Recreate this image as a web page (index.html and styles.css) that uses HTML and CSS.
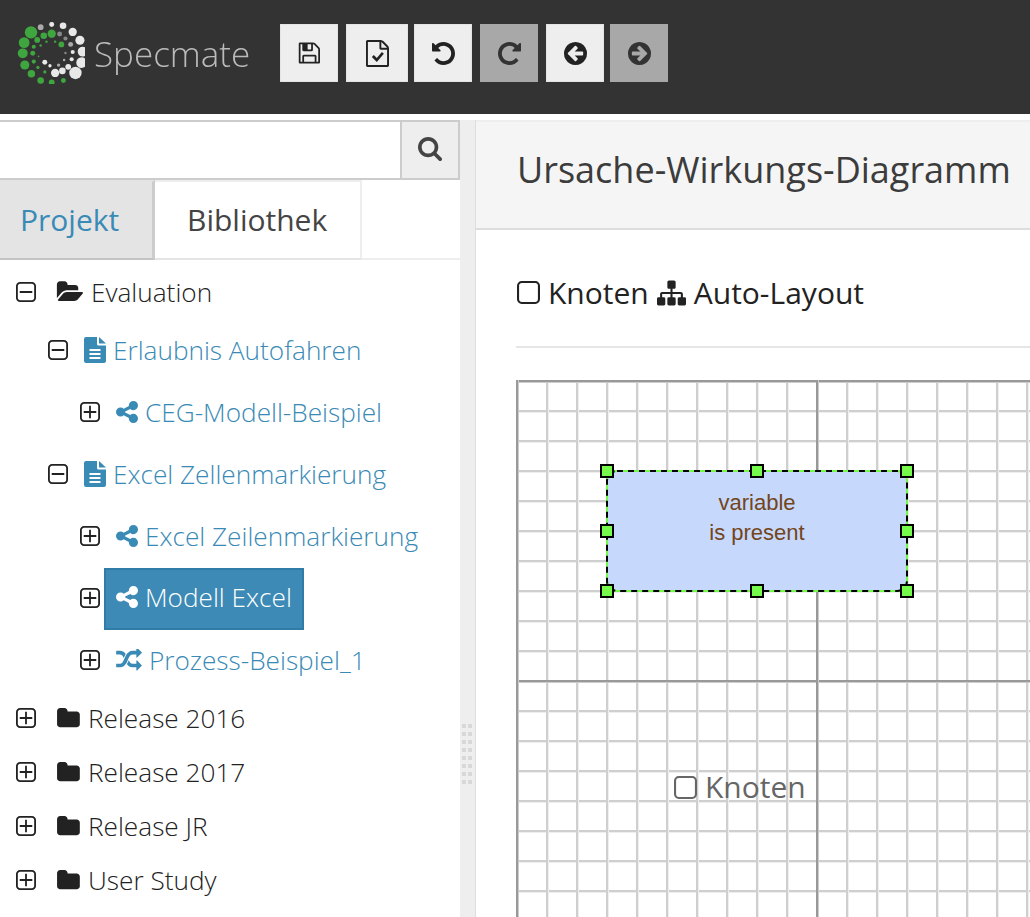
FILE: index.html
```html
<!DOCTYPE html>
<html lang="de">
<head>
  <meta charset="UTF-8">
  <title>Specmate</title>
  <link rel="stylesheet" href="styles.css">
</head>
<body>

<svg class="sprites" width="0" height="0">
  <symbol id="i-save" viewBox="0 128 1664 1536"><path d="M512 1536h768v-384h-768v384zm896 0h128v-896q0-14-10-38.500t-20-34.500l-281-281q-10-10-34-20t-39-10v416q0 40-28 68t-68 28h-576q-40 0-68-28t-28-68v-416h-128v1280h128v-416q0-40 28-68t68-28h832q40 0 68 28t28 68v416zm-384-928v-320q0-13-9.500-22.500t-22.500-9.500h-192q-13 0-22.500 9.500t-9.500 22.500v320q0 13 9.500 22.500t22.500 9.500h192q13 0 22.500-9.500t9.500-22.500zm640 32v928q0 40-28 68t-68 28h-1344q-40 0-68-28t-28-68v-1344q0-40 28-68t68-28h928q40 0 88 20t76 48l280 280q28 28 48 76t20 88z"/></symbol>
  <symbol id="i-filecheck" viewBox="128 0 1536 1792"><path d="M1596 380q28 28 48 76t20 88v1152q0 40-28 68t-68 28h-1344q-40 0-68-28t-28-68v-1600q0-40 28-68t68-28h896q40 0 88 20t76 48zm-444-244v376h376q-10-29-22-41l-313-313q-12-12-41-22zm384 1528v-1024h-416q-40 0-68-28t-28-68v-416h-768v1536h1280z"/><path d="M520 1130l130-130 200 200 340-400 130 115-470 550z"/></symbol>
  <symbol id="i-undo" viewBox="128 128 1536 1536"><path d="M1664 896q0 156-61 298t-164 245-245 164-298 61q-172 0-327-72.500t-264-204.500q-7-10-6.500-22.500t8.500-20.500l137-138q10-9 25-9 16 2 23 12 73 95 179 147t225 52q104 0 198.500-40.500t163.500-109.500 109.500-163.500 40.500-198.500-40.500-198.500-109.500-163.500-163.500-109.500-198.500-40.500q-98 0-188 35.500t-160 101.500l137 138q31 30 14 69-17 40-59 40h-448q-26 0-45-19t-19-45v-448q0-42 40-59 39-17 69 14l130 129q107-101 244.500-156.500t284.500-55.500q156 0 298 61t245 164 164 245 61 298z"/></symbol>
  <symbol id="i-arrow" viewBox="0 128 1536 1536"><path d="M1280 960v-128q0-26-19-45t-45-19h-502l189-189q19-19 19-45t-19-45l-91-91q-18-18-45-18t-45 18l-362 362-91 91q-18 18-18 45t18 45l91 91 362 362q18 18 45 18t45-18l91-91q18-18 18-45t-18-45l-189-189h502q26 0 45-19t19-45zm256-64q0 209-103 385.500t-279.500 279.500-385.500 103-385.500-103-279.500-279.500-103-385.500 103-385.500 279.500-279.500 385.500-103 385.500 103 279.500 279.500 103 385.500z"/></symbol>
  <symbol id="i-search" viewBox="0 128 1664 1664"><path d="M1152 832q0-185-131.500-316.500t-316.500-131.500-316.500 131.500-131.500 316.500 131.500 316.500 316.500 131.500 316.500-131.500 131.500-316.500zm512 832q0 52-38 90t-90 38q-54 0-90-38l-343-342q-179 124-399 124-143 0-273.500-55.500t-225-150-150-225-55.500-273.500 55.500-273.500 150-225 225-150 273.500-55.500 273.500 55.500 225 150 150 225 55.500 273.500q0 220-124 399l343 343q37 37 37 90z"/></symbol>
  <symbol id="i-plus" viewBox="192 128 1408 1408"><path d="M1344 800v64q0 14-9 23t-23 9h-352v352q0 14-9 23t-23 9h-64q-14 0-23-9t-9-23v-352h-352q-14 0-23-9t-9-23v-64q0-14 9-23t23-9h352v-352q0-14 9-23t23-9h64q14 0 23 9t9 23v352h352q14 0 23 9t9 23zm128 448v-832q0-66-47-113t-113-47h-832q-66 0-113 47t-47 113v832q0 66 47 113t113 47h832q66 0 113-47t47-113zm128-832v832q0 119-84.500 203.500t-203.500 84.500h-832q-119 0-203.500-84.500t-84.500-203.500v-832q0-119 84.500-203.500t203.500-84.500h832q119 0 203.500 84.500t84.500 203.500z"/></symbol>
  <symbol id="i-minus" viewBox="192 128 1408 1408"><path d="M1344 800v64q0 14-9 23t-23 9h-832q-14 0-23-9t-9-23v-64q0-14 9-23t23-9h832q14 0 23 9t9 23zm128 448v-832q0-66-47-113t-113-47h-832q-66 0-113 47t-47 113v832q0 66 47 113t113 47h832q66 0 113-47t47-113zm128-832v832q0 119-84.500 203.500t-203.500 84.500h-832q-119 0-203.500-84.500t-84.500-203.500v-832q0-119 84.500-203.500t203.500-84.500h832q119 0 203.500 84.500t84.500 203.500z"/></symbol>
  <symbol id="i-folder" viewBox="0 128 1728 1536"><path d="M1728 608v704q0 92-66 158t-158 66h-1216q-92 0-158-66t-66-158v-960q0-92 66-158t158-66h320q92 0 158 66t66 158v32h672q92 0 158 66t66 158z"/></symbol>
  <symbol id="i-folder-open" viewBox="0 128 1943 1536"><path d="M1943 952q0 31-31 66l-336 396q-43 51-120.500 86.500t-143.500 35.500h-1088q-34 0-60.500-13t-26.500-43q0-31 31-66l336-396q43-51 120.500-86.500t143.500-35.500h1088q34 0 60.500 13t26.500 43zm-343-344v160h-832q-94 0-197 47.500t-164 119.500l-337 396-5 6q0-4-.5-12.500t-.5-12.500v-960q0-92 66-158t158-66h320q92 0 158 66t66 158v32h544q92 0 158 66t66 158z"/></symbol>
  <symbol id="i-doc" viewBox="0 0 22 26"><path fill-rule="evenodd" d="M2 0h11v7q0 1.500 1.500 1.500H22V24q0 2-2 2H2q-2 0-2-2V2q0-2 2-2zM15 0l7 6.500h-7zM5.500 12v2h11v-2zM5.500 16v2h11v-2zM5.500 20v2h11v-2z"/></symbol>
  <symbol id="i-share" viewBox="0 128 1536 1536"><path d="M1216 1024q133 0 226.500 93.500t93.500 226.500-93.500 226.500-226.500 93.500-226.500-93.500-93.500-226.500q0-12 2-34l-360-180q-92 86-218 86-133 0-226.500-93.500t-93.500-226.500 93.500-226.500 226.500-93.500q126 0 218 86l360-180q-2-22-2-34 0-133 93.500-226.500t226.500-93.500 226.500 93.500 93.500 226.500-93.500 226.500-226.500 93.500q-126 0-218-86l-360 180q2 22 2 34t-2 34l360 180q92-86 218-86z"/></symbol>
  <symbol id="i-random" viewBox="0 128 1792 1536"><path d="M666 481q-60 92-137 273-22-45-37-72.500t-40.500-63.500-51-56.500-63-35-81.500-14.500h-224q-14 0-23-9t-9-23v-192q0-14 9-23t23-9h224q250 0 410 225zm1126 799q0 14-9 23l-320 320q-9 9-23 9-13 0-22.500-9.500t-9.500-22.500v-192q-32 0-85 .5t-81 1-73-1-71-5-64-10.500-63-18.500-58-28.500-59-40-55-53.500-56-69.500q59-93 136-273 22 45 37 72.500t40.500 63.500 51 56.500 63 35 81.500 14.500h256v-192q0-14 9-23t23-9q12 0 24 10l319 319q9 9 9 23zm0-896q0 14-9 23l-320 320q-9 9-23 9-13 0-22.500-9.500t-9.500-22.500v-192h-256q-48 0-87 15t-69 45-51 61.500-45 77.500q-32 62-78 171-29 66-49.500 111t-54 105-64 100-74 83-90 68.500-106.500 42-128 16.500h-224q-14 0-23-9t-9-23v-192q0-14 9-23t23-9h224q48 0 87-15t69-45 51-61.500 45-77.500q32-62 78-171 29-66 49.500-111t54-105 64-100 74-83 90-68.500 106.500-42 128-16.500h256v-192q0-14 9-23t23-9q12 0 24 10l319 319q9 9 9 23z"/></symbol>
  <symbol id="i-square" viewBox="0 128 1408 1408"><path d="M1120 256h-832q-66 0-113 47t-47 113v832q0 66 47 113t113 47h832q66 0 113-47t47-113v-832q0-66-47-113t-113-47zm288 160v832q0 119-84.500 203.500t-203.500 84.500h-832q-119 0-203.500-84.500t-84.500-203.500v-832q0-119 84.500-203.500t203.500-84.500h832q119 0 203.500 84.500t84.500 203.500z"/></symbol>
  <symbol id="i-sitemap" viewBox="0 128 1792 1536"><path d="M1792 1248v320q0 40-28 68t-68 28h-320q-40 0-68-28t-28-68v-320q0-40 28-68t68-28h96v-192h-512v192h96q40 0 68 28t28 68v320q0 40-28 68t-68 28h-320q-40 0-68-28t-28-68v-320q0-40 28-68t68-28h96v-192h-512v192h96q40 0 68 28t28 68v320q0 40-28 68t-68 28h-320q-40 0-68-28t-28-68v-320q0-40 28-68t68-28h96v-192q0-52 38-90t90-38h512v-192h-96q-40 0-68-28t-28-68v-320q0-40 28-68t68-28h320q40 0 68 28t28 68v320q0 40-28 68t-68 28h-96v192h512q52 0 90 38t38 90v192h96q40 0 68 28t28 68z"/></symbol>
</svg>

<nav class="navbar">
  <div class="brand">
    <svg class="brand-mark" viewBox="50 40 196 180">
      <g fill="#3fa63f">
        <circle cx="90" cy="70" r="15"/><circle cx="70" cy="100" r="13"/><circle cx="66" cy="131" r="12"/>
        <circle cx="72" cy="165" r="11"/><circle cx="91" cy="190" r="9"/><circle cx="118" cy="210" r="8"/>
        <circle cx="150" cy="215" r="7"/><circle cx="184" cy="210" r="6"/><circle cx="127" cy="80" r="8"/>
        <circle cx="150" cy="74" r="10"/><circle cx="108" cy="92" r="7"/><circle cx="95" cy="131" r="6"/>
        <circle cx="98" cy="155" r="5"/><circle cx="110" cy="172" r="4"/><circle cx="98" cy="112" r="5"/>
        <circle cx="130" cy="185" r="4"/><circle cx="178" cy="105" r="7"/><circle cx="160" cy="97" r="3"/>
        <circle cx="135" cy="97" r="3"/><circle cx="118" cy="108" r="3"/><circle cx="112" cy="140" r="2"/>
      </g>
      <g fill="#e8e8e8">
        <circle cx="118" cy="55" r="7" fill="#aaa"/><circle cx="150" cy="47" r="6"/><circle cx="183" cy="51" r="8"/>
        <circle cx="211" cy="69" r="10"/><circle cx="232" cy="93" r="11"/><circle cx="240" cy="126" r="12"/>
        <circle cx="237" cy="158" r="13"/><circle cx="219" cy="188" r="15"/><circle cx="198" cy="170" r="7"/>
        <circle cx="181" cy="182" r="8"/><circle cx="160" cy="188" r="10"/><circle cx="208" cy="148" r="5"/>
        <circle cx="211" cy="127" r="5"/><circle cx="205" cy="105" r="6" fill="#aaa"/><circle cx="190" cy="88" r="5" fill="#888"/>
        <circle cx="173" cy="75" r="6" fill="#888"/><circle cx="130" cy="157" r="6"/><circle cx="145" cy="167" r="4"/>
        <circle cx="170" cy="165" r="4" fill="#aaa"/><circle cx="186" cy="150" r="3" fill="#aaa"/><circle cx="190" cy="130" r="3" fill="#888"/>
      </g>
    </svg>
    <span class="brand-name">Specmate</span>
  </div>
  <div class="toolbar">
    <button class="tool-btn"><svg class="ic-save"><use href="#i-save"/></svg></button>
    <button class="tool-btn btn-wide"><svg class="ic-check"><use href="#i-filecheck"/></svg></button>
    <button class="tool-btn btn-tight"><svg class="ic-round"><use href="#i-undo"/></svg></button>
    <button class="tool-btn off"><svg class="ic-round flip"><use href="#i-undo"/></svg></button>
    <button class="tool-btn"><svg class="ic-round"><use href="#i-arrow"/></svg></button>
    <button class="tool-btn off btn-tight"><svg class="ic-round flip"><use href="#i-arrow"/></svg></button>
  </div>
</nav>

<div class="main">
  <aside class="sidebar">
    <div class="search">
      <input class="search-input" type="text">
      <button class="search-btn"><svg><use href="#i-search"/></svg></button>
    </div>
    <div class="tabs">
      <div class="tab active">Projekt</div>
      <div class="tab">Bibliothek</div>
    </div>
    <ul class="tree">
      <li class="row root">
        <svg class="toggle"><use href="#i-minus"/></svg>
        <a class="node"><svg class="ic-open"><use href="#i-folder-open"/></svg>Evaluation</a>
      </li>
      <li class="row lvl1">
        <svg class="toggle"><use href="#i-minus"/></svg>
        <a class="node link"><svg class="ic-doc"><use href="#i-doc"/></svg>Erlaubnis Autofahren</a>
      </li>
      <li class="row lvl2">
        <svg class="toggle"><use href="#i-plus"/></svg>
        <a class="node link"><svg class="ic-share"><use href="#i-share"/></svg>CEG-Modell-Beispiel</a>
      </li>
      <li class="row lvl1">
        <svg class="toggle"><use href="#i-minus"/></svg>
        <a class="node link"><svg class="ic-doc"><use href="#i-doc"/></svg>Excel Zellenmarkierung</a>
      </li>
      <li class="row lvl2">
        <svg class="toggle"><use href="#i-plus"/></svg>
        <a class="node link"><svg class="ic-share"><use href="#i-share"/></svg>Excel Zeilenmarkierung</a>
      </li>
      <li class="row lvl2">
        <svg class="toggle"><use href="#i-plus"/></svg>
        <a class="node selected"><svg class="ic-share"><use href="#i-share"/></svg>Modell Excel</a>
      </li>
      <li class="row lvl2">
        <svg class="toggle"><use href="#i-plus"/></svg>
        <a class="node link"><svg class="ic-random"><use href="#i-random"/></svg>Prozess-Beispiel_1</a>
      </li>
      <li class="row root">
        <svg class="toggle"><use href="#i-plus"/></svg>
        <a class="node"><svg class="ic-folder"><use href="#i-folder"/></svg>Release 2016</a>
      </li>
      <li class="row root">
        <svg class="toggle"><use href="#i-plus"/></svg>
        <a class="node"><svg class="ic-folder"><use href="#i-folder"/></svg>Release 2017</a>
      </li>
      <li class="row root">
        <svg class="toggle"><use href="#i-plus"/></svg>
        <a class="node"><svg class="ic-folder"><use href="#i-folder"/></svg>Release JR</a>
      </li>
      <li class="row root">
        <svg class="toggle"><use href="#i-plus"/></svg>
        <a class="node"><svg class="ic-folder"><use href="#i-folder"/></svg>User Study</a>
      </li>
    </ul>
  </aside>

  <div class="splitter"><div class="grip"></div></div>

  <section class="content">
    <header class="page-head">Ursache-Wirkungs-Diagramm</header>
    <div class="page-body">
      <div class="palette">
        <svg class="ic-square"><use href="#i-square"/></svg>Knoten
        <svg class="ic-sitemap"><use href="#i-sitemap"/></svg>Auto-Layout
      </div>
      <div class="canvas">
        <div class="ceg-node">
          <svg class="ceg-shape" viewBox="0 0 300 120">
            <rect class="shape-fill" x="0" y="0" width="300" height="120" rx="10"/>
            <rect class="shape-dash" x="0" y="0" width="300" height="120" rx="10"/>
          </svg>
          <div class="ceg-label">variable<br>is present</div>
          <span class="handle h-tl"></span><span class="handle h-tc"></span><span class="handle h-tr"></span>
          <span class="handle h-ml"></span><span class="handle h-mr"></span>
          <span class="handle h-bl"></span><span class="handle h-bc"></span><span class="handle h-br"></span>
        </div>
        <div class="canvas-hint"><svg class="ic-square"><use href="#i-square"/></svg>Knoten</div>
      </div>
    </div>
  </section>
</div>

</body>
</html>
```
FILE: styles.css
```css
html, body {
  margin: 0;
  height: 917px;
  overflow: hidden;
}
body {
  font-family: "Open Sans", sans-serif;
  color: #333;
  background: #fff;
}
svg {
  fill: currentColor;
}
.sprites {
  position: absolute;
}

/* navbar */
.navbar {
  display: flex;
  height: 114px;
  background: #333;
}
.brand {
  display: flex;
  width: 280px;
  height: 82px;
  padding: 24px 0 0 17px;
  box-sizing: border-box;
  align-items: center;
}
.brand-mark {
  width: 68px;
  height: 62px;
  flex: none;
  filter: blur(0.5px);
}
.brand-mark circle {
  transform-box: fill-box;
  transform-origin: center;
  transform: scale(1.2);
}
.brand-name {
  margin-left: 9px;
  font-size: 35px;
  font-weight: 300;
  color: #bbb;
  filter: blur(0.6px);
}
.toolbar {
  display: flex;
  gap: 8px;
  padding-top: 24px;
}
.tool-btn {
  display: flex;
  align-items: center;
  justify-content: center;
  width: 58px;
  height: 58px;
  padding: 0;
  background: #eee;
  border: 1px solid #e4e4e4;
  color: #222;
}
.tool-btn.off {
  background: #a8a8a8;
  border-color: #a8a8a8;
  color: #333;
}
.btn-wide {
  width: 62px;
}
.btn-tight {
  margin-left: -2px;
}
.ic-save { width: 23px; height: 22px; margin-right: 2px; }
.ic-check { width: 23px; height: 27px; }
.ic-round { width: 23px; height: 23px; }
.flip { transform: scaleX(-1); }

/* main layout */
.main {
  display: flex;
  margin-top: 6px;
  height: 797px;
}
.sidebar {
  width: 460px;
  flex: none;
}
.search {
  display: flex;
  height: 60px;
  box-sizing: border-box;
  border-top: 2px solid #ccc;
  border-bottom: 2px solid #ccc;
}
.search-input {
  flex: 1;
  min-width: 0;
  border: none;
  padding: 0;
}
.search-btn {
  width: 60px;
  padding: 0 0 2px;
  background: #eee;
  border: none;
  border-left: 2px solid #ccc;
  border-right: 2px solid #ccc;
  color: #444;
}
.search-btn svg {
  width: 24px;
  height: 24px;
  display: block;
  margin: 0 auto;
}

.tabs {
  display: flex;
  height: 80px;
  box-sizing: border-box;
  border-bottom: 2px solid #eee;
}
.tab {
  height: 80px;
  box-sizing: border-box;
  padding: 0 33px 0 32px;
  line-height: 76px;
  font-size: 30px;
  color: #444;
  border-top: 2px solid #eee;
  border-right: 2px solid #eee;
  border-bottom: 2px solid #e4e4e4;
}
.tab.active {
  width: 155px;
  padding: 0 0 0 20px;
  color: #3a8ab6;
  background: #e4e4e4;
  border-top-color: #e4e4e4;
  border-right: 3px solid #ccc;
  border-bottom-color: #c4c4c4;
}

/* tree */
.tree {
  list-style: none;
  margin: 5px 0 0;
  padding: 0;
  font-size: 26.2px;
  font-weight: 300;
  color: #222;
}
.row {
  display: flex;
  align-items: center;
}
.row.root { height: 54px; padding-left: 16px; }
.row.lvl1 { height: 62px; padding-left: 48px; }
.row.lvl2 { height: 62px; padding-left: 80px; }
.toggle {
  width: 20px;
  height: 20px;
  flex: none;
  margin-right: 4px;
  color: #222;
}
.node {
  display: flex;
  align-items: center;
  height: 62px;
  box-sizing: border-box;
  padding: 0 10px 0 12px;
  white-space: nowrap;
}
.root .node {
  padding-left: 16px;
}
.node svg {
  flex: none;
  margin-right: 8px;
}
.link svg, .selected svg {
  margin-right: 7px;
}
.link {
  color: #3a8ab6;
}
.selected {
  margin-top: 2px;
  color: #fff;
  background: #3c8ab5;
  border: 2px solid #2f7ca8;
  padding-left: 10px;
  padding-bottom: 4px;
}
.ic-open { width: 27px; height: 22px; color: #222; }
.ic-folder { width: 24px; height: 21px; color: #222; }
.ic-doc { width: 22px; height: 26px; }
.ic-share { width: 22px; height: 22px; }
.ic-random { width: 26px; height: 22px; }

.splitter {
  position: relative;
  width: 15px;
  flex: none;
  background: #eee;
  border-right: 1px solid #ddd;
}
.grip {
  position: absolute;
  left: 2px;
  top: 604px;
  width: 10px;
  height: 60px;
  background-image: conic-gradient(at 4px 4px, transparent 75%, #d8d8d8 0);
  background-size: 6px 8px;
}

/* content */
.content {
  flex: 1;
  min-width: 0;
}
.page-head {
  height: 110px;
  box-sizing: border-box;
  padding-left: 41px;
  line-height: 96px;
  font-size: 36px;
  color: #3c3c3c;
  background: #f5f5f5;
  border-top: 2px solid #eee;
  border-bottom: 2px solid #ddd;
  white-space: nowrap;
}
.page-body {
  padding: 0 0 0 40px;
}
.palette {
  display: flex;
  align-items: center;
  height: 118px;
  box-sizing: border-box;
  padding: 9px 0 0 1px;
  font-size: 30px;
  color: #222;
  border-bottom: 2px solid #e6e6e6;
}
.ic-square {
  width: 23px;
  height: 23px;
  margin-right: 8px;
}
.ic-sitemap {
  width: 29px;
  height: 26px;
  margin: 0 8px;
}
.canvas {
  position: relative;
  height: 560px;
  margin-top: 32px;
  overflow: hidden;
  background-color: #fff;
  background-image:
    linear-gradient(to right, #999 2px, #ccc 2px, #ccc 3px, transparent 3px),
    linear-gradient(to bottom, #999 2px, #ccc 2px, #ccc 3px, transparent 3px),
    linear-gradient(to right, #cfcfcf 2px, #eee 2px, #eee 3px, transparent 3px),
    linear-gradient(to bottom, #cfcfcf 2px, #eee 2px, #eee 3px, transparent 3px);
  background-size: 300px 100%, 100% 300px, 30px 100%, 100% 30px;
}
.ceg-node {
  position: absolute;
  left: 91px;
  top: 91px;
  width: 300px;
  height: 120px;
}
.ceg-shape {
  position: absolute;
  left: 0;
  top: 0;
  width: 300px;
  height: 120px;
  overflow: visible;
}
.shape-fill {
  fill: #c6d8fb;
  stroke: #74f84a;
  stroke-width: 2;
}
.shape-dash {
  fill: none;
  stroke: #000;
  stroke-width: 2;
  stroke-dasharray: 6 5;
}
.ceg-label {
  position: relative;
  padding-top: 17px;
  text-align: center;
  font-family: "Liberation Sans", Arial, sans-serif;
  font-size: 22px;
  line-height: 30px;
  color: #73451a;
}
.handle {
  position: absolute;
  width: 14px;
  height: 14px;
  box-sizing: border-box;
  background: #76fb4c;
  border: 2px solid #000;
}
.h-tl { left: -7px; top: -7px; }
.h-tc { left: 143px; top: -7px; }
.h-tr { left: 293px; top: -7px; }
.h-ml { left: -7px; top: 53px; }
.h-mr { left: 293px; top: 53px; }
.h-bl { left: -7px; top: 113px; }
.h-bc { left: 143px; top: 113px; }
.h-br { left: 293px; top: 113px; }
.canvas-hint {
  position: absolute;
  left: 158px;
  top: 387px;
  display: flex;
  align-items: center;
  font-size: 30px;
  line-height: 40px;
  color: #666;
}
```
